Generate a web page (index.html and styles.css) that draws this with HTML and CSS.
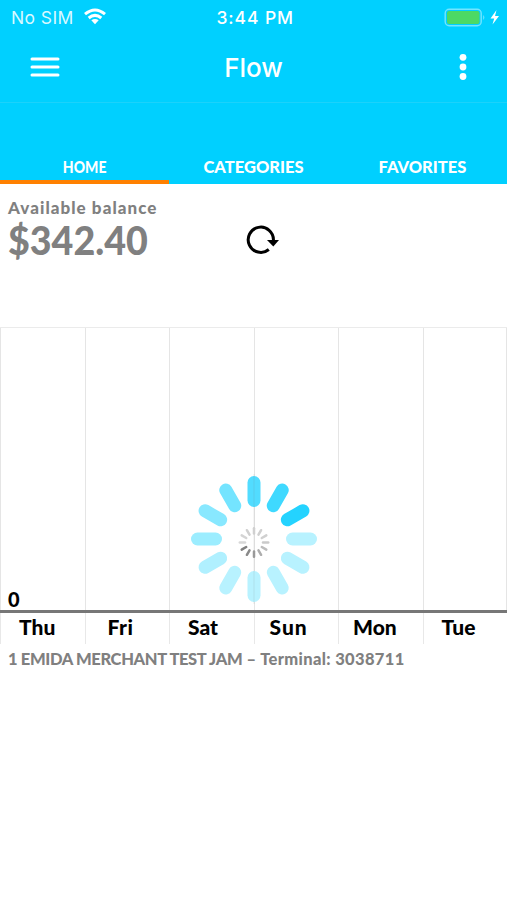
FILE: index.html
```html
<!DOCTYPE html>
<html lang="en">
<head>
    <meta charset="UTF-8">
    <meta name="viewport" content="width=device-width, initial-scale=1.0">
    <title>Flow</title>
    <link rel="stylesheet" href="styles.css">
</head>
<body>
    <header>
        <div class="status-bar">
            <div class="carrier">
                <span>No SIM</span>
                <svg width="24" height="18" viewBox="0 0 24 18" fill="none" stroke="#fff" stroke-width="3">
                    <path d="M2 6.2Q12 -2.2 22 6.2M5.7 10Q12 4.8 18.3 10"/>
                    <path d="M8.3 12.3Q12 9.6 15.7 12.3L12 16.2Z" fill="#fff" stroke="none"/>
                </svg>
            </div>
            <span class="time">3:44 PM</span>
            <svg class="battery" width="56" height="20" viewBox="0 0 56 20">
                <rect x="1.2" y="1.2" width="36" height="16.6" rx="4" fill="none" stroke="#72e5ff" stroke-width="1.4"/>
                <rect x="3" y="3" width="32.5" height="13" rx="2.2" fill="#4cd964"/>
                <path d="M39.2 7Q41.5 9.5 39.2 12Z" fill="#72e5ff"/>
                <path d="M52.5 2L46.5 10.5H50.2L48.5 16.5L55 8H51Z" fill="#fff"/>
            </svg>
        </div>
        <div class="nav-bar">
            <svg width="30" height="22" viewBox="0 0 30 22" stroke="#fff" stroke-width="3" stroke-linecap="round">
                <path d="M2 3H28M2 11H28M2 19H28"/>
            </svg>
            <h1>Flow</h1>
            <svg class="more" width="8" height="28" viewBox="0 0 8 28" fill="#fff">
                <circle cx="4" cy="4.3" r="3.4"/>
                <circle cx="4" cy="14" r="3.4"/>
                <circle cx="4" cy="23.5" r="3.4"/>
            </svg>
        </div>
        <nav class="tabs">
            <a class="tab active"><span class="home">HOME</span></a>
            <a class="tab"><span>CATEGORIES</span></a>
            <a class="tab"><span>FAVORITES</span></a>
        </nav>
    </header>

    <section class="balance">
        <div class="balance-text">
            <div class="label">Available balance</div>
            <div class="amount"><span>$342.40</span></div>
        </div>
        <svg class="refresh" width="36" height="32" viewBox="0 0 36 32">
            <path d="M24.8 24.5A12.6 12.6 0 1 1 29.4 15.5" fill="none" stroke="#000" stroke-width="3"/>
            <path d="M23 15H35L29.3 21.5Z"/>
        </svg>
    </section>

    <section class="chart">
        <div class="columns">
            <div class="column"><span class="zero">0</span></div>
            <div class="column"></div>
            <div class="column"></div>
            <div class="column"></div>
            <div class="column"></div>
            <div class="column"></div>
        </div>
        <div class="days">
            <div class="day">Thu</div>
            <div class="day fri">Fri</div>
            <div class="day">Sat</div>
            <div class="day sun">Sun</div>
            <div class="day mon">Mon</div>
            <div class="day">Tue</div>
        </div>
        <!-- loading spinners over the chart -->
        <svg class="spinner" width="130" height="130" viewBox="-65 -65 130 130">
            <defs>
                <path id="bar" d="M0 -38.5V-56.5" stroke-width="13" stroke-linecap="round"/>
                <path id="tick" d="M0 -9V-14.2" stroke-width="2.5" stroke-linecap="round"/>
            </defs>
            <g stroke="#52dcff">
                <use href="#bar"/>
                <use href="#bar" transform="rotate(30)" stroke="#3fd9ff"/>
                <use href="#bar" transform="rotate(60)" stroke="#24d3ff"/>
                <use href="#bar" transform="rotate(90)" stroke="#b8f2ff"/>
                <use href="#bar" transform="rotate(120)" stroke="#b8f2ff"/>
                <use href="#bar" transform="rotate(150)" stroke="#b8f2ff"/>
                <use href="#bar" transform="rotate(180)" stroke="#b8f2ff"/>
                <use href="#bar" transform="rotate(210)" stroke="#b8f2ff"/>
                <use href="#bar" transform="rotate(240)" stroke="#b0f0ff"/>
                <use href="#bar" transform="rotate(270)" stroke="#9cedff"/>
                <use href="#bar" transform="rotate(300)" stroke="#88e8ff"/>
                <use href="#bar" transform="rotate(330)" stroke="#74e4ff"/>
            </g>
            <path d="M0 -65V65" stroke="#808080" stroke-opacity=".15"/>
            <g transform="translate(0 3.5)">
                <use href="#tick" stroke="#d0d0d0"/>
                <use href="#tick" transform="rotate(30)" stroke="#d0d0d0"/>
                <use href="#tick" transform="rotate(60)" stroke="#d0d0d0"/>
                <use href="#tick" transform="rotate(90)" stroke="#cacaca"/>
                <use href="#tick" transform="rotate(120)" stroke="#bcbcbc"/>
                <use href="#tick" transform="rotate(150)" stroke="#adadad"/>
                <use href="#tick" transform="rotate(180)" stroke="#999"/>
                <use href="#tick" transform="rotate(210)" stroke="#8a8a8a"/>
                <use href="#tick" transform="rotate(240)" stroke="#808080"/>
                <use href="#tick" transform="rotate(270)" stroke="#d8d8d8"/>
                <use href="#tick" transform="rotate(300)" stroke="#d4d4d4"/>
                <use href="#tick" transform="rotate(330)" stroke="#d0d0d0"/>
            </g>
        </svg>
    </section>

    <footer class="terminal"><span class="merchant">1 EMIDA MERCHANT TEST JAM</span> – Terminal: 3038711</footer>
</body>
</html>
```
FILE: styles.css
```css
* {
    box-sizing: border-box;
}
body {
    margin: 0;
    background-color: #fff;
    font-family: Lato, sans-serif;
    font-weight: 900;
    white-space: nowrap;
}
svg {
    display: block;
}
header {
    height: 184px;
    background-color: #00d0ff;
    color: #fff;
}
.status-bar {
    display: grid;
    grid-template-columns: 1fr 80px 1fr;
    align-items: center;
    height: 35px;
    padding: 0 7px 0 11px;
    font-family: Inter, sans-serif;
    font-size: 17.5px;
    font-weight: 400;
}
.carrier {
    display: flex;
    gap: 9px;
    letter-spacing: 0.4px;
    color: #d9f8ff;
}
.carrier span {
    line-height: 20px;
}
.time {
    padding-left: 1px;
    font-weight: 500;
    letter-spacing: 0.9px;
}
.battery {
    justify-self: end;
}
.nav-bar {
    display: grid;
    grid-template-columns: 1fr auto 1fr;
    align-items: center;
    height: 68px;
    padding: 0 30px 3px;
    border-bottom: 1px solid #1cd2fb;
}
h1 {
    margin: 0;
    font-family: Inter, sans-serif;
    font-size: 26px;
    font-weight: 500;
    line-height: 30px;
    padding-top: 2px;
}
.more {
    justify-self: end;
    margin-right: 10px;
}
.tabs {
    display: flex;
    height: 81px;
    align-items: flex-end;
}
.tab {
    flex: 1;
    height: 30px;
    text-align: center;
    font-size: 16.5px;
    line-height: 26px;
    border-bottom: 4px solid transparent;
}
.tab.active {
    border-bottom-color: #ff8000;
}
.home, .amount span {
    display: inline-block;
}
.home {
    transform: scaleX(0.85);
}
.balance {
    display: flex;
    height: 143px;
    padding: 14px 8px 0;
    color: #808080;
}
.balance-text {
    width: 236px;
}
.label {
    font-size: 17px;
    line-height: 20px;
    letter-spacing: 1.05px;
}
.amount {
    font-size: 40px;
    line-height: 44px;
}
.amount span {
    transform: scaleX(0.94);
    transform-origin: left;
}
.refresh {
    margin-top: 27px;
}
.chart {
    position: relative;
    height: 317px;
    border-top: 1px solid #ebebeb;
}
.columns, .days {
    display: grid;
    grid-template-columns: repeat(6, 1fr);
}
.columns {
    height: 285px;
    border-bottom: 3px solid #777;
    box-shadow: inset -1px 0 #e5e5e5;
}
.column {
    display: flex;
    align-items: flex-end;
    border-left: 1px solid #e5e5e5;
}
.zero {
    padding-left: 7px;
    font-size: 20px;
    line-height: 22px;
}
.day {
    height: 31px;
    padding-left: 18px;
    border-left: 1px solid #e8e8e8;
    font-size: 21px;
    line-height: 27px;
}
.day.fri {
    padding-left: 22px;
    letter-spacing: 0.5px;
}
.day.sun {
    padding-left: 15px;
    letter-spacing: 1px;
}
.day.mon {
    padding-left: 14px;
}
.spinner {
    position: absolute;
    top: 146px;
    left: 189px;
}
.terminal {
    padding: 5px 8px;
    color: #808080;
    font-size: 16.5px;
    line-height: 20px;
    letter-spacing: 0.35px;
}
.merchant {
    letter-spacing: -0.35px;
}
```
